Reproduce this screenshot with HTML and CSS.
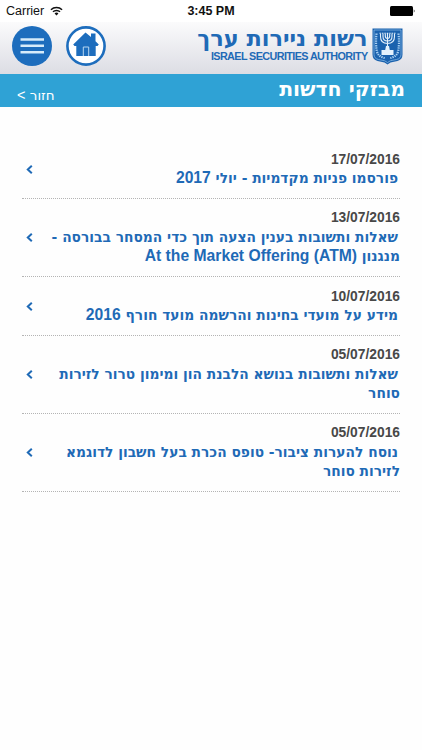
FILE: index.html
```html
<!DOCTYPE html>
<html lang="he" dir="rtl">
<head>
    <meta charset="UTF-8">
    <meta name="viewport" content="width=device-width, initial-scale=1.0">
    <title>מבזקי חדשות</title>
    <link rel="stylesheet" href="styles.css">
</head>
<body>
    <div class="status-bar" dir="ltr">
        <div class="carrier">
            <span>Carrier</span>
            <svg class="wifi" viewBox="0 0 14 10">
                <path d="M1 3.6a8.6 8.6 0 0 1 12 0M3.2 5.9a5.4 5.4 0 0 1 7.6 0" fill="none" stroke="#111" stroke-width="1.6"/>
                <path d="M4.9 7.6a3 3 0 0 1 4.2 0L7 9.8z" fill="#111"/>
            </svg>
        </div>
        <div class="clock">3:45 PM</div>
        <svg class="battery" viewBox="0 0 26 10">
            <rect x="0" y="0" width="23" height="10" rx="1.5"/>
            <path d="M23.8 3.2q1.7 1.8 0 3.6z"/>
        </svg>
    </div>
    <header class="header">
        <a class="logo">
            <svg class="emblem" viewBox="0 0 31 37">
                <path d="M.5.5h30v26q0 5-5 6.5l-7 1.5-3 2-3-2-7-1.5q-5-1.5-5-6.5z" fill="#1b62ae"/>
                <path d="M2 2h27v24.5q0 4-4.5 5l-6 1.2-3 1.8-3-1.8-6-1.2q-4.5-1-4.5-5z" fill="none" stroke="#8fc0ea" stroke-width=".7"/>
                <!-- menorah -->
                <g fill="none" stroke="#e4f1fc" stroke-width="1.1">
                    <path d="M8.5 6v2.5q0 7 7 7t7-7V6M11 6v2.5q0 4.5 4.5 4.5T20 8.5V6M13.3 6v2q0 2.5 2.2 2.5t2.2-2.5V6M15.5 5v16"/>
                    <path d="M7.5 5.2h16" stroke-dasharray="1.6 .8"/>
                </g>
                <path d="M14 18h3l.8 4h3.7v5h-12v-5h3.7z" fill="#e4f1fc"/>
                <!-- olive branches -->
                <g fill="none" stroke="#a9d0f2" stroke-width="2.2" stroke-dasharray="1.3 1">
                    <path d="M4.5 5.5q-1 10 .2 17 1 6 8 7.500"/>
                    <path d="M26.5 5.5q1 10-.2 17-1 6-8 7.500"/>
                </g>
            </svg>
            <span class="logo-text">
                <span class="logo-he">רשות ניירות ערך</span>
                <span class="logo-en" dir="ltr">ISRAEL SECURITIES AUTHORITY</span>
            </span>
        </a>
        <nav class="tools">
            <svg class="tool" viewBox="0 0 40 40">
                <circle cx="20" cy="20" r="18.6" fill="#fff" stroke="#1d6dbd" stroke-width="2.6"/>
                <path d="M19.5 6.5l5.500 4.600V7.500h4.500v7.800l3.300 3.200-1.300 1.500h-1.800v10H10.300V20H8.500l-1.300-1.500z" fill="#1d6dbd"/>
                <path d="M17.3 30v-9h5.400v9" fill="#1d6dbd" stroke="#b9d7f0" stroke-width="1"/>
            </svg>
            <svg class="tool" viewBox="0 0 40 40">
                <circle cx="20" cy="20" r="20" fill="#1d6dbd"/>
                <path d="M8.5 13.5h23.500M8.500 19.800h23.500M8.500 26.200h23.500" stroke="#d6ebfa" stroke-width="2.400"/>
            </svg>
        </nav>
    </header>
    <div class="title-bar">
        <h1>מבזקי חדשות</h1>
        <a class="back">חזור <span>&gt;</span></a>
    </div>
    <main>
        <ul class="news-list">
            <li>
                <div class="news">
                    <time>17/07/2016</time>
                    <p><span class="line first">פורסמו פניות מקדמיות - יולי <span class="latin">2017</span></span></p>
                </div>
                <svg class="arrow" viewBox="0 0 7 9"><path d="M5.8.8L1.8 4.5l4 3.7"/></svg>
            </li>
            <li>
                <div class="news">
                    <time>13/07/2016</time>
                    <p>
                        <span class="line first">שאלות ותשובות בענין הצעה תוך כדי המסחר בבורסה -</span>
                        <span class="line">מנגנון <span class="latin" dir="ltr">At the Market Offering (ATM)</span></span>
                    </p>
                </div>
                <svg class="arrow" viewBox="0 0 7 9"><path d="M5.8.8L1.8 4.5l4 3.7"/></svg>
            </li>
            <li>
                <div class="news">
                    <time>10/07/2016</time>
                    <p><span class="line first">מידע על מועדי בחינות והרשמה מועד חורף <span class="latin">2016</span></span></p>
                </div>
                <svg class="arrow" viewBox="0 0 7 9"><path d="M5.8.8L1.8 4.5l4 3.7"/></svg>
            </li>
            <li>
                <div class="news">
                    <time>05/07/2016</time>
                    <p>
                        <span class="line first">שאלות ותשובות בנושא הלבנת הון ומימון טרור לזירות</span>
                        <span class="line">סוחר</span>
                    </p>
                </div>
                <svg class="arrow" viewBox="0 0 7 9"><path d="M5.8.8L1.8 4.5l4 3.7"/></svg>
            </li>
            <li>
                <div class="news">
                    <time>05/07/2016</time>
                    <p>
                        <span class="line first">נוסח להערות ציבור- טופס הכרת בעל חשבון לדוגמא</span>
                        <span class="line">לזירות סוחר</span>
                    </p>
                </div>
                <svg class="arrow" viewBox="0 0 7 9"><path d="M5.8.8L1.8 4.5l4 3.7"/></svg>
            </li>
        </ul>
    </main>
</body>
</html>
```
FILE: styles.css
```css
*{padding:0; margin:0; list-style:none; box-sizing:border-box;}
:root{
    --blue:#1f6ab6;
    --bar-color:#2fa2d5;
    --hebrew:"DejaVu Sans", sans-serif;
    --latin:"Liberation Sans", Arial, sans-serif;
}
body{
    background:#fefefe; color:var(--blue);
    font-family:var(--latin);
    overflow:hidden;
}
svg{display:block; flex:none;}

/* status bar */
.status-bar{
    height:22px; padding:0 6px;
    display:grid; grid-template-columns:1fr auto 1fr; align-items:center;
    background:#fff; color:#111; font-size:12.5px;
}
.carrier{display:flex; align-items:center; gap:6px;}
.wifi{width:13px; height:10px;}
.clock{font-weight:bold;}
.battery{width:26px; height:10px; justify-self:end;}

/* header */
.header{
    height:52px; padding:4px 19.5px 0 12px;
    display:flex; justify-content:space-between; align-items:flex-start;
    background:linear-gradient(#fbfbfc, #dcdde4);
}
.logo{display:flex; gap:4px; padding-top:2px;}
.emblem{width:31px; height:37px;}
.logo-text{display:flex; flex-direction:column; font-weight:bold; white-space:nowrap;}
.logo-he{font-family:var(--hebrew); font-size:22.4px; line-height:21px;}
.logo-en{font-size:10.8px; line-height:14px; letter-spacing:-.6px; text-align:right;}
.tools{display:flex; gap:14px;}
.tool{width:40px; height:40px;}

/* title */
.title-bar{
    height:33px; padding:0 17px;
    display:flex; justify-content:space-between;
    background:var(--bar-color); color:#fff;
    font-family:var(--hebrew);
}
.title-bar h1{font-size:20.4px; line-height:31px;}
.back{font-size:13.5px; line-height:42px;}
.back span{font-family:var(--latin); font-size:14.5px;}

/* news */
main{padding:33px 22px 0;}
.news-list li{
    display:flex; justify-content:space-between; align-items:center;
    padding:9.7px 0 9px; border-bottom:1px dotted #b4b4b4;
}
.news{font-weight:bold; line-height:19.5px;}
.news time{display:block; color:#484848; font-size:13.8px;}
.news p{font-family:var(--hebrew); font-size:13.8px;}
.line{display:block; width:max-content; height:19.5px; white-space:nowrap;}
.first{margin-right:2px;}
.latin{font-family:var(--latin); font-size:15.7px; line-height:1;}
.arrow{width:7px; height:9px; margin-left:4px;}
.arrow path{fill:none; stroke:var(--blue); stroke-width:2;}
```
